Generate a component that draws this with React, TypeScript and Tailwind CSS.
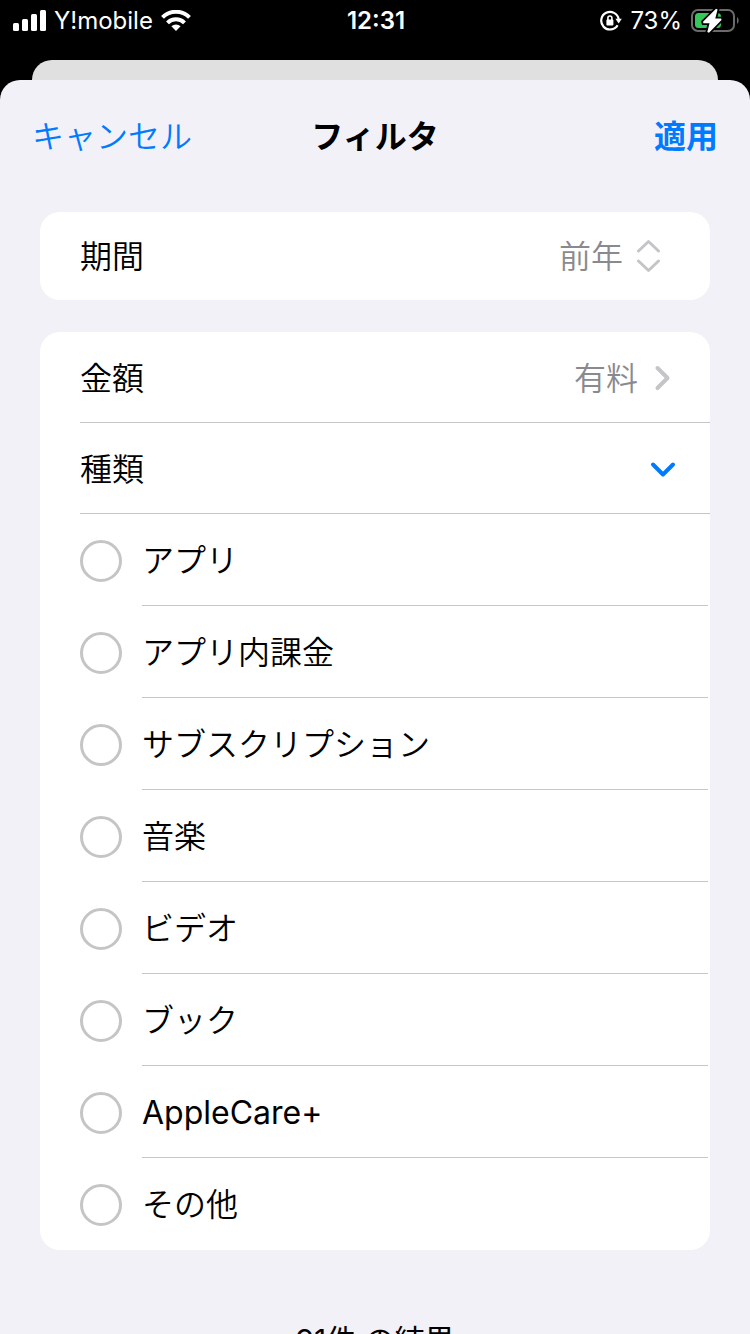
import { useState } from 'react';

const categories = [
  { id: 'apps', label: 'アプリ' },
  { id: 'in-app', label: 'アプリ内課金' },
  { id: 'subscriptions', label: 'サブスクリプション' },
  { id: 'music', label: '音楽' },
  { id: 'video', label: 'ビデオ' },
  { id: 'books', label: 'ブック' },
  { id: 'applecare', label: 'AppleCare+', latin: true },
  { id: 'other', label: 'その他' },
];

function StatusBar() {
  return (
    <div className="grid grid-cols-3 items-center h-10 pt-[2px] pl-3 pr-[10px] text-white text-[24px] leading-8 font-normal shrink-0">
      <div className="flex items-center gap-2">
        <svg width="34" height="22" viewBox="0 0 34 22" fill="currentColor" aria-hidden="true">
          <rect x="1" y="13" width="6" height="8" rx="1.5" />
          <rect x="10" y="9" width="6" height="12" rx="1.5" />
          <rect x="19" y="4" width="6" height="17" rx="1.5" />
          <rect x="28" y="0" width="6" height="21" rx="1.5" />
        </svg>
        <span>Y!mobile</span>
        <svg width="30" height="22" viewBox="0 0 30 22" fill="none" stroke="currentColor" strokeWidth="4" aria-hidden="true">
          <path d="M1.500 7.300a19.200 19.200 0 0 1 27 0" />
          <path d="M6.500 12.900a12 12 0 0 1 17 0" />
          <path d="M15 21l-4.600-4.700a6.500 6.500 0 0 1 9.200 0z" fill="currentColor" stroke="none" />
        </svg>
      </div>
      <div className="text-center font-semibold">12:31</div>
      <div className="flex items-center justify-end gap-2">
        <svg width="22" height="22" viewBox="0 0 22 22" fill="none" aria-hidden="true">
          <path d="M17.600 15.200a8.800 8.800 0 1 1 1.100-6" stroke="currentColor" strokeWidth="2.2" />
          <path d="M15.400 8.800h6.400l-3.100 4.800z" fill="currentColor" />
          <rect x="6.400" y="9.500" width="7" height="6" rx="1" fill="currentColor" />
          <path d="M7.900 10V8a2 2 0 0 1 4 0v2" stroke="currentColor" strokeWidth="1.600" />
        </svg>
        <span>73%</span>
        <svg width="50" height="26" viewBox="0 0 50 26" aria-hidden="true">
          <rect x="2" y="2" width="42" height="21" rx="6" fill="none" stroke="#6b6b6b" strokeWidth="2" />
          <path d="M47 9a4.500 4.500 0 0 1 0 7z" fill="#6b6b6b" />
          <rect x="5" y="5" width="26" height="15" rx="3.500" fill="#34c759" />
          <path d="M26 .8l1.600.8-2.300 8.900h5.900l.3 1.500L19 24.700l-1.700-.8L19.500 15.300h-6.100l-.4-1.500z" fill="#fff" stroke="#000" strokeWidth="3.500" paintOrder="stroke" />
        </svg>
      </div>
    </div>
  );
}

export default function App() {
  const [period, setPeriod] = useState('previous');
  const [selected, setSelected] = useState('');

  return (
    <div
      lang="ja"
      className="h-screen flex flex-col overflow-hidden bg-black text-black font-[350] text-[32px] leading-[48px] font-['Inter','Noto_Sans_CJK_JP',sans-serif]"
    >
      <StatusBar />

      {/* the screen behind the sheet */}
      <div className="mt-5 mx-8 h-5 shrink-0 rounded-t-[20px] bg-[#e0e0e0]" />

      <main className="flex-1 min-h-0 flex flex-col rounded-t-[20px] bg-[#f2f1f7]">
        <header className="grid grid-cols-3 items-center h-[112px] pt-[2px] px-8 shrink-0">
          <button type="button" className="justify-self-start text-[#007aff]">キャンセル</button>
          <h1 className="text-center font-bold">フィルタ</h1>
          <button type="button" className="justify-self-end font-bold text-[#007aff]">適用</button>
        </header>

        <div className="flex-1 min-h-0 overflow-y-auto px-10 pt-5 [scrollbar-width:none]">
          {/* PERIOD */}
          <section className="flex items-center justify-between h-[88px] pl-10 pr-12 rounded-[20px] bg-white">
            <label htmlFor="period" className="pt-[2px]">期間</label>
            <div className="flex items-center gap-3 text-[#8a8a8e]">
              <select
                id="period"
                value={period}
                onChange={(e) => setPeriod(e.target.value)}
                className="appearance-none bg-transparent pt-[2px]"
              >
                <option value="previous">前年</option>
                <option value="current">今年</option>
              </select>
              <svg width="26" height="34" viewBox="0 0 26 34" fill="none" stroke="#c5c5c7" strokeWidth="3" strokeLinecap="round" strokeLinejoin="round" aria-hidden="true">
                <path d="M2.500 12L12.500 2.500l10 9.500M2.500 22l10 9.500 10-9.500" />
              </svg>
            </div>
          </section>

          {/* AMOUNT + CATEGORY */}
          <section className="mt-8 pl-10 rounded-[20px] bg-white overflow-hidden">
            <button type="button" className="flex items-center justify-between w-full h-[91px] pt-[3px] pr-8 border-b border-[#c6c6c8]">
              <span>金額</span>
              <span className="flex items-center gap-2 text-[#8a8a8e]">
                有料
                <svg width="32" height="28" viewBox="0 0 32 28" fill="none" stroke="#c5c5c7" strokeWidth="4" strokeLinecap="round" strokeLinejoin="round" aria-hidden="true">
                  <path d="M11.500 3L21.500 13l-10 10" />
                </svg>
              </span>
            </button>
            <button type="button" aria-expanded="true" className="flex items-center justify-between w-full h-[91px] pt-[3px] pr-8 border-b border-[#c6c6c8]">
              <span id="category">種類</span>
              <svg width="30" height="28" viewBox="0 0 30 28" fill="none" stroke="#007aff" strokeWidth="4" strokeLinecap="round" strokeLinejoin="round" aria-hidden="true">
                <path d="M5 8.500L15 18.500l10-10" />
              </svg>
            </button>

            <div role="radiogroup" aria-labelledby="category">
              {categories.map((item) => (
                <label key={item.id} className="group flex items-center gap-5 h-[92px] pt-[2px] pr-[2px]">
                  <input
                    type="radio"
                    name="category"
                    checked={selected === item.id}
                    onChange={() => setSelected(item.id)}
                    className="appearance-none size-[42px] shrink-0 rounded-full border-[3px] border-[#c5c5c7] checked:border-[12px] checked:border-[#007aff]"
                  />
                  <span className={`flex flex-1 items-center h-full border-b border-[#c6c6c8] group-last:border-transparent ${item.latin ? 'font-normal' : ''}`}>
                    {item.label}
                  </span>
                </label>
              ))}
            </div>
          </section>

          <p className="mt-16 pt-[2px] pb-8 text-center text-[30px] font-normal">91件 の結果</p>
        </div>
      </main>
    </div>
  );
}
